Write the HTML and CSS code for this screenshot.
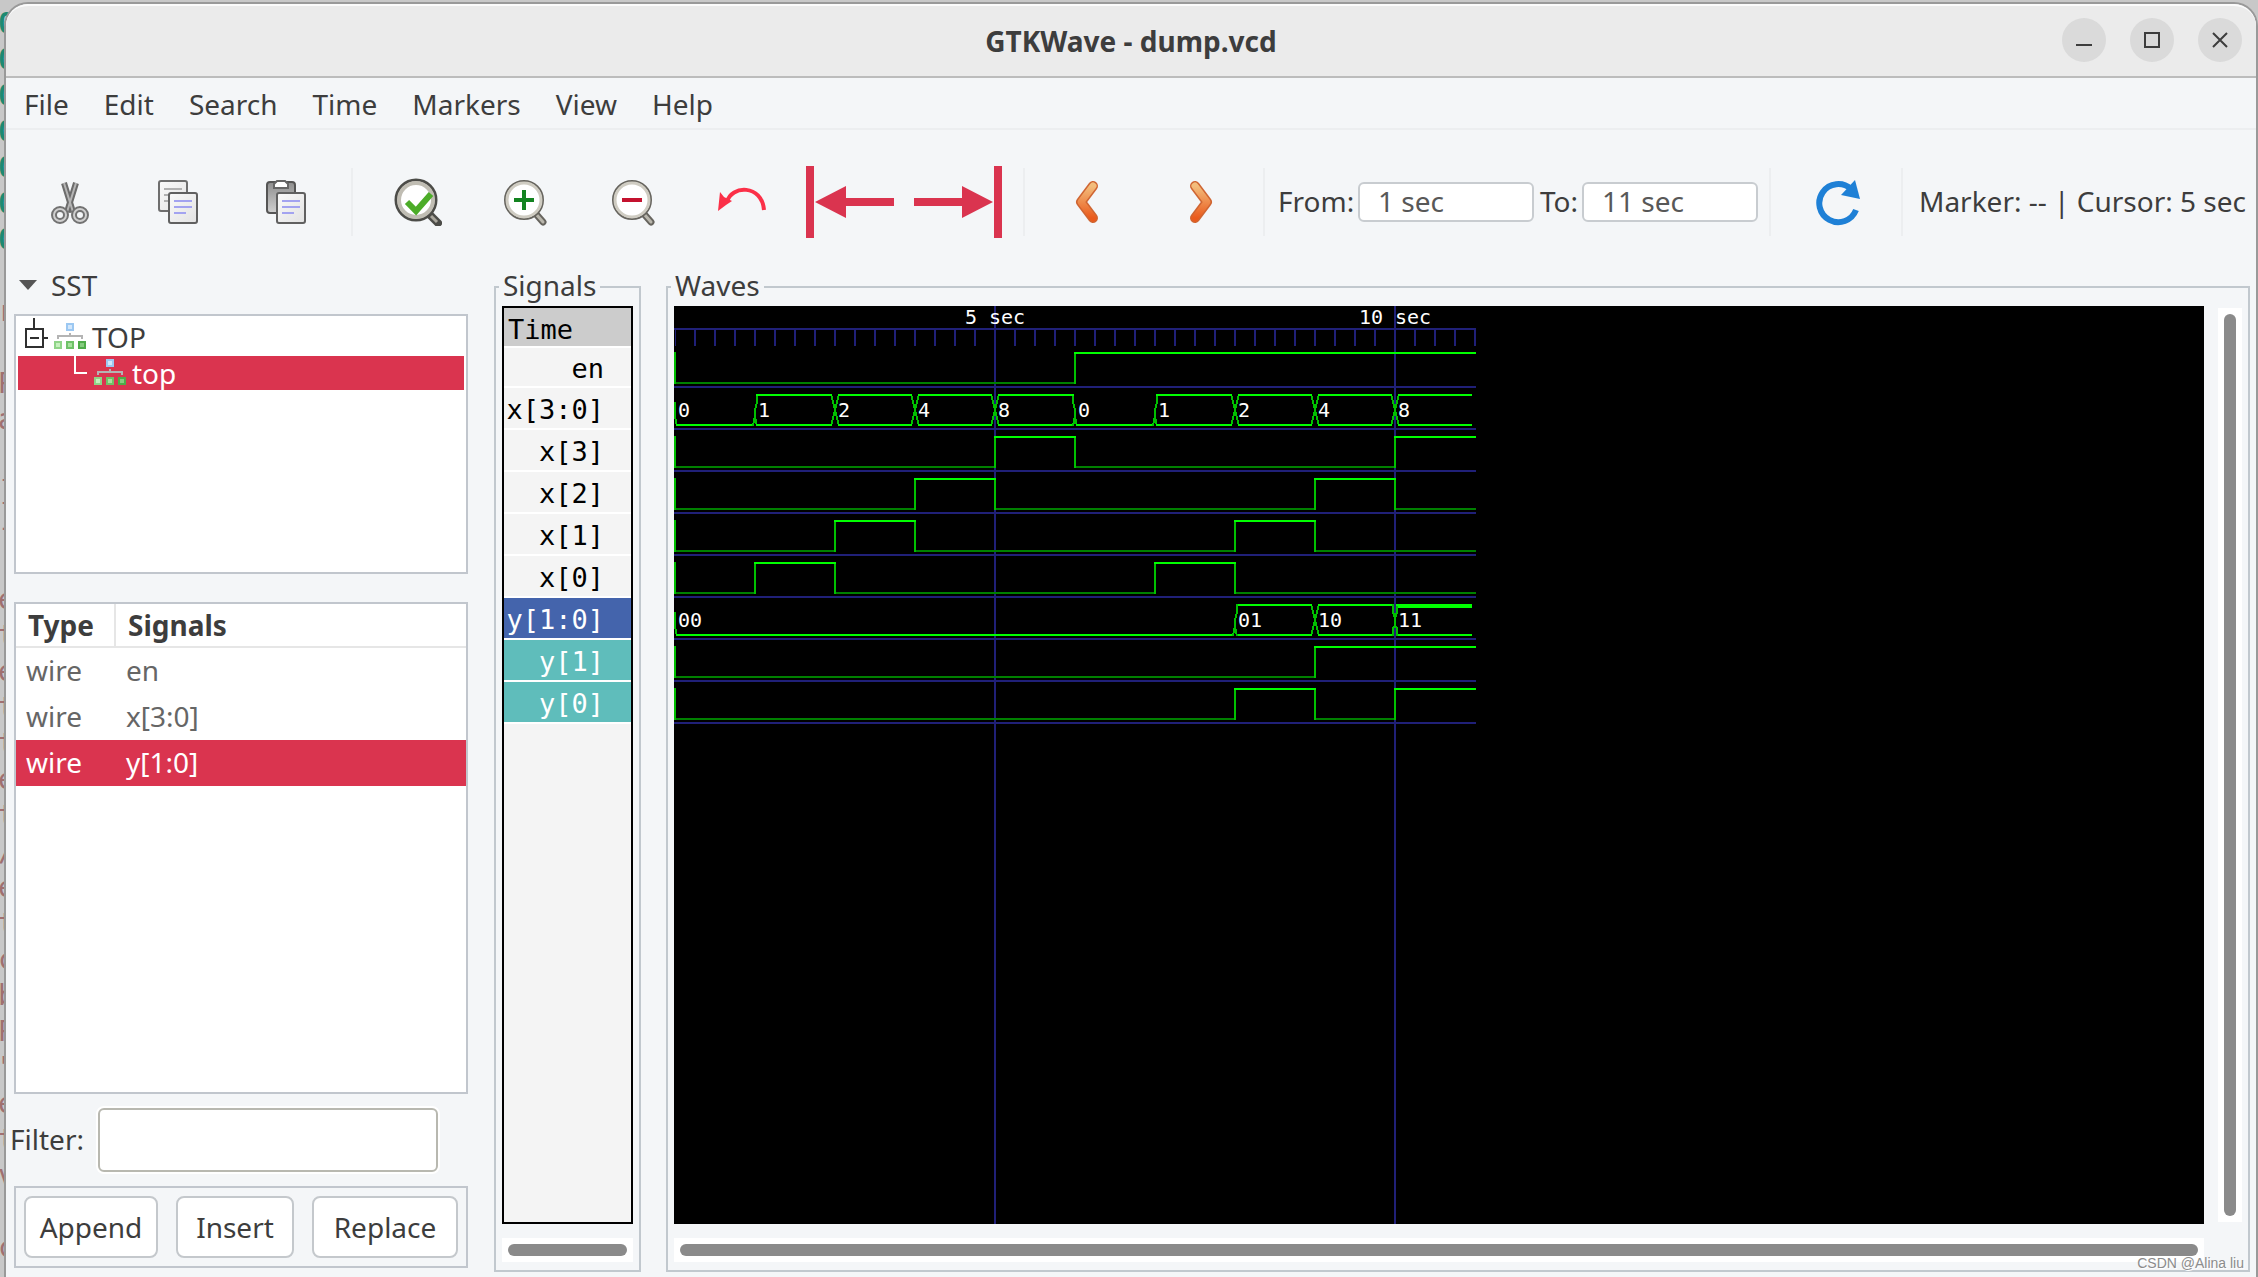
FILE: index.html
```html
<!DOCTYPE html>
<html lang="en">
<head>
<meta charset="utf-8">
<title>GTKWave - dump.vcd</title>
<link rel="stylesheet" href="styles.css">
</head>
<body>
<svg class="defs" aria-hidden="true">
  <defs>
    <linearGradient id="amber" x1="0" y1="0" x2="0" y2="1"><stop offset="0" stop-color="#f3bd7c"/><stop offset="1" stop-color="#ea5a1c"/></linearGradient>
    <linearGradient id="paper" x1="0" y1="0" x2="1" y2="1"><stop offset="0" stop-color="#fafafa"/><stop offset="1" stop-color="#e2e2e2"/></linearGradient>
    <linearGradient id="board" x1="0" y1="0" x2="0" y2="1"><stop offset="0" stop-color="#8e8e8e"/><stop offset="1" stop-color="#d0d0d0"/></linearGradient>
    <symbol id="module" viewBox="0 0 32 28">
      <rect x="12" y="0" width="8" height="8" fill="#9cc8f2"/><rect x="14" y="2" width="4" height="4" fill="#d3e7fb"/>
      <path d="M16 10v3M4 16v-3h24v3" fill="none" stroke="#b4b4b4" stroke-width="2"/>
      <rect x="0" y="18" width="8" height="8" fill="#8fd487"/><rect x="2" y="20" width="4" height="4" fill="#c5f0bd"/>
      <rect x="12" y="18" width="8" height="8" fill="#6fc268"/><rect x="14" y="20" width="4" height="4" fill="#a8e09f"/>
      <rect x="24" y="18" width="8" height="8" fill="#4fab49"/><rect x="26" y="20" width="4" height="4" fill="#86cb7f"/>
    </symbol>
    <symbol id="page" viewBox="0 0 30 32">
      <rect x="1" y="1" width="28" height="30" rx="2" fill="url(#paper)" stroke="#606060" stroke-width="2"/>
      <path d="M6 9h18M6 15h18M6 21h12" stroke="#a3a3f0" stroke-width="2"/>
    </symbol>
    <symbol id="lens" viewBox="0 0 48 48">
      <path d="M34 36l7 8" stroke="#66645e" stroke-width="7" stroke-linecap="round"/>
      <path d="M34 36l7 8" stroke="#b9b6ac" stroke-width="3" stroke-linecap="round"/>
      <circle cx="22" cy="22" r="19" fill="#fff" stroke="#66645e" stroke-width="2"/>
      <circle cx="22" cy="22" r="17" fill="none" stroke="#cfccc2" stroke-width="3"/>
    </symbol>
  </defs>
</svg>

<div class="terminal" aria-hidden="true"><pre><b>0
0
0
0
0
0
0</b>

r

P
a

]
-

e
t
e
t
t
e
t
/
e
t
c
b
P
"
e
t
v

c</pre></div>

<div class="window">
  <header class="titlebar">
    <h1>GTKWave - dump.vcd</h1>
    <div class="controls">
      <button type="button" aria-label="Minimize"><svg viewBox="0 0 44 44"><path d="M14 27h16" stroke="#3d3d3d" stroke-width="2"/></svg></button>
      <button type="button" aria-label="Maximize"><svg viewBox="0 0 44 44"><rect x="15" y="15" width="14" height="14" fill="none" stroke="#3d3d3d" stroke-width="2"/></svg></button>
      <button type="button" aria-label="Close"><svg viewBox="0 0 44 44"><path d="M15 15l14 14M29 15l-14 14" stroke="#3d3d3d" stroke-width="2"/></svg></button>
    </div>
  </header>

  <nav class="menubar">
    <button type="button">File</button><button type="button">Edit</button><button type="button">Search</button><button type="button">Time</button><button type="button">Markers</button><button type="button">View</button><button type="button">Help</button>
  </nav>

  <div class="toolbar">
    <button type="button" class="tool" aria-label="Cut"><svg viewBox="0 0 48 48">
      <g fill="none" stroke="#6c6c6c" stroke-width="6"><path d="M18 5l9 29M30 5l-9 29"/></g>
      <g fill="none" stroke="#b5b5b5" stroke-width="2"><path d="M18 5l9 29M30 5l-9 29"/></g>
      <g fill="none" stroke="#727272" stroke-width="6"><circle cx="14" cy="37" r="6"/><circle cx="34" cy="37" r="6"/></g>
      <g fill="none" stroke="#cfcfcf" stroke-width="2"><circle cx="14" cy="37" r="6"/><circle cx="34" cy="37" r="6"/></g></svg></button>
    <button type="button" class="tool" aria-label="Copy"><svg viewBox="0 0 48 48">
      <rect x="5" y="3" width="28" height="30" rx="2" fill="url(#paper)" stroke="#6e6e6e" stroke-width="2"/>
      <path d="M10 11h18M10 17h10M10 23h6" stroke="#b0b0b0" stroke-width="2"/><use href="#page" x="14" y="14" width="30" height="32"/></svg></button>
    <button type="button" class="tool" aria-label="Paste"><svg viewBox="0 0 48 48">
      <rect x="5" y="4" width="28" height="31" rx="3" fill="url(#board)" stroke="#555" stroke-width="2"/>
      <path d="M12 10V6l3-3h8l3 3v4z" fill="#fff" stroke="#666" stroke-width="2"/><use href="#page" x="14" y="14" width="30" height="32"/></svg></button>
    <span class="sep"></span>
    <button type="button" class="tool" aria-label="Zoom fit"><svg viewBox="0 0 48 48">
      <path d="M37 38l7 7" stroke="#4c4c48" stroke-width="8" stroke-linecap="round"/><path d="M37 38l6 6" stroke="#a9a69c" stroke-width="3"/>
      <circle cx="22" cy="22" r="20" fill="#fff" stroke="#4c4c48" stroke-width="3"/><circle cx="22" cy="22" r="17" fill="none" stroke="#c0bdb3" stroke-width="4"/>
      <path d="M13 24l9 9 15-17" fill="none" stroke="#4cac28" stroke-width="6"/></svg></button>
    <button type="button" class="tool" aria-label="Zoom in"><svg viewBox="0 0 48 48"><use href="#lens"/><path d="M12 22h20M22 12v20" stroke="#138320" stroke-width="4"/></svg></button>
    <button type="button" class="tool" aria-label="Zoom out"><svg viewBox="0 0 48 48"><use href="#lens"/><path d="M12 22h20" stroke="#c4122f" stroke-width="4"/></svg></button>
    <button type="button" class="tool" aria-label="Undo zoom"><svg viewBox="0 0 48 48"><path d="M9 24C13 7 44 6 46 32" fill="none" stroke="#fb3048" stroke-width="4"/><path d="M0 33l2-19 4 5 8 4-6 4z" fill="#fb3048"/></svg></button>
    <button type="button" class="tool wide" aria-label="Zoom to start"><svg viewBox="0 0 88 72"><path d="M0 0h8v72H0zM9 36L40 20v12h48v8H40v12z" fill="#da344f"/></svg></button>
    <button type="button" class="tool wide" aria-label="Zoom to end"><svg viewBox="0 0 88 72"><path d="M80 0h8v72h-8zM79 36L48 20v12H0v8h48v12z" fill="#da344f"/></svg></button>
    <span class="sep"></span>
    <button type="button" class="tool" aria-label="Previous edge"><svg viewBox="0 0 48 48"><g fill="none" stroke-linecap="round" stroke-linejoin="round"><path d="M27 8L15 24l12 16" stroke="#cf6532" stroke-width="10"/><path d="M27 8L15 24l12 16" stroke="url(#amber)" stroke-width="7"/></g></svg></button>
    <button type="button" class="tool" aria-label="Next edge"><svg viewBox="0 0 48 48"><g fill="none" stroke-linecap="round" stroke-linejoin="round"><path d="M21 8l12 16-12 16" stroke="#cf6532" stroke-width="10"/><path d="M21 8l12 16-12 16" stroke="url(#amber)" stroke-width="7"/></g></svg></button>
    <span class="sep"></span>
    <label class="from" for="from">From:</label><input id="from" class="time" type="text" value="1 sec">
    <label class="to" for="to">To:</label><input id="to" class="time" type="text" value="11 sec">
    <span class="sep"></span>
    <button type="button" class="tool" aria-label="Reload"><svg viewBox="0 0 48 48"><path d="M39 11A19 19 0 1 0 44 32" fill="none" stroke="#1e80d6" stroke-width="6"/><path d="M43 2l5 19-19-4z" fill="#1e80d6"/></svg></button>
    <span class="sep"></span>
    <output class="status">Marker: -- | Cursor: 5 sec</output>
  </div>

  <main class="panes">
    <section class="sst">
      <button type="button" class="expander"><svg viewBox="0 0 18 10"><path d="M0 0h18l-9 10z" fill="#555"/></svg>SST</button>
      <ul class="tree">
        <li><svg class="branch" viewBox="0 0 32 38"><path d="M16 0v10M26 20h4M8 11h17v18H8zM12 20h9" fill="none" stroke="#303030" stroke-width="2"/></svg><svg class="module"><use href="#module"/></svg>TOP</li>
        <li class="child selected"><svg class="branch" viewBox="0 0 32 34"><path d="M17 0v17h12" fill="none" stroke="#fff" stroke-width="2"/></svg><svg class="module"><use href="#module"/></svg>top</li>
      </ul>
      <div class="facilities">
        <table>
          <thead><tr><th>Type</th><th>Signals</th></tr></thead>
          <tbody>
            <tr><td>wire</td><td>en</td></tr>
            <tr><td>wire</td><td>x[3:0]</td></tr>
            <tr class="selected"><td>wire</td><td>y[1:0]</td></tr>
          </tbody>
        </table>
      </div>
      <div class="filter"><label for="filter">Filter:</label><input id="filter" type="text"></div>
      <div class="actions"><button type="button">Append</button><button type="button">Insert</button><button type="button">Replace</button></div>
    </section>

    <fieldset class="frame">
      <legend>Signals</legend>
      <ul class="names">
        <li class="head">Time</li>
        <li class="scalar">en</li>
        <li>x[3:0]</li>
        <li>x[3]</li>
        <li>x[2]</li>
        <li>x[1]</li>
        <li>x[0]</li>
        <li class="bus">y[1:0]</li>
        <li class="bit">y[1]</li>
        <li class="bit">y[0]</li>
      </ul>
      <div class="track"><div class="thumb"></div></div>
    </fieldset>

    <fieldset class="frame waves">
      <legend>Waves</legend>
      <div class="canvas">
        <svg class="plot" width="802" role="img" aria-label="Waveforms">
          <!-- time ruler, row dividers and 5-second grid lines -->
          <g fill="#202078">
            <rect y="22" width="802" height="2"/>
            <path class="ticks" d="M1 32h801"/>
            <rect x="320" width="2" height="100%"/><rect x="720" width="2" height="100%"/>
          </g>
          <path class="divider" d="M0 81h802M0 123h802M0 165h802M0 207h802M0 249h802M0 291h802M0 333h802M0 375h802M0 417h802"/>
          <path class="low" d="M0 77h402M0 161h322M400 161h322M0 203h242M320 203h322M720 203h82M0 245h162M240 245h322M640 245h162M0 287h82M160 287h322M560 287h242M0 371h642M0 413h562M640 413h82"/>
          <path class="edge" d="M1 46v32M401 46v32M1 130v32M321 130v32M401 130v32M721 130v32M1 172v32M241 172v32M321 172v32M641 172v32M721 172v32M1 214v32M161 214v32M241 214v32M561 214v32M641 214v32M1 256v32M81 256v32M161 256v32M481 256v32M561 256v32M1 340v32M641 340v32M1 382v32M561 382v32M641 382v32M721 382v32"/>
          <path class="high" d="M400 47h402M320 131h82M720 131h82M240 173h82M640 173h82M160 215h82M560 215h82M80 257h82M480 257h82M640 341h162M560 383h82M720 383h82"/>
          <!-- x[3:0] -->
          <path class="edge" d="M1 96v14l2 10M83 88v8l-2 8v6l-2 10M81 110l2 10M157 88l8 32M165 88l-8 32M237 88l8 32M245 88l-8 32M317 88l8 32M325 88l-8 32M399 88v8l2 8v6l2 10M401 110l-2 10M483 88v8l-2 8v6l-2 10M481 110l2 10M557 88l8 32M565 88l-8 32M637 88l8 32M645 88l-8 32M717 88l8 32M725 88l-8 32"/>
          <path class="high" d="M2 119h76M82 119h76M164 119h74M244 119h74M324 119h74M402 119h76M482 119h76M564 119h74M644 119h74M724 119h74M82 89h76M164 89h74M244 89h74M324 89h76M482 89h76M564 89h74M644 89h74M724 89h74"/>
          <!-- y[1:0] -->
          <path class="edge" d="M1 306v14l2 10M563 298v8l-2 8v6l-2 10M561 320l2 10M637 298l8 32M645 298l-8 32M719 298v8l2 6v8l-2 2v8M723 298v8l-2 6v8l2 2v8"/>
          <path class="high" d="M2 329h556M564 329h74M644 329h74M724 329h74M564 299h74M644 299h74M722 299h76M724 301h74"/>
          <g class="labels">
            <text x="321" y="18" text-anchor="middle">5 sec</text><text x="721" y="18" text-anchor="middle">10 sec</text>
            <text x="4" y="111">0</text><text x="84" y="111">1</text><text x="164" y="111">2</text><text x="244" y="111">4</text><text x="324" y="111">8</text>
            <text x="404" y="111">0</text><text x="484" y="111">1</text><text x="564" y="111">2</text><text x="644" y="111">4</text><text x="724" y="111">8</text>
            <text x="4" y="321">00</text><text x="564" y="321">01</text><text x="644" y="321">10</text><text x="724" y="321">11</text>
          </g>
        </svg>
      </div>
      <div class="track vertical"><div class="thumb"></div></div>
      <div class="track"><div class="thumb"></div></div>
    </fieldset>
  </main>
  <span class="watermark">CSDN @Alina liu</span>
</div>
</body>
</html>
```
FILE: styles.css
```css
* { box-sizing: border-box; }
body {
  margin: 0;
  min-height: 100vh;
  display: flex;
  background: #c8c8c8;
  font: 28px/38px "Noto Sans", "Open Sans", sans-serif;
  color: #3d3d3d;
  padding-top: 2px;
  position: relative;
}
button, input { font: inherit; color: inherit; margin: 0; }
button { background: none; border: 0; padding: 0; }
ul { list-style: none; margin: 0; padding: 0; }
svg { display: block; }
.defs { position: absolute; width: 0; height: 0; }

/* sliver of the terminal behind the window */
.terminal { flex: 0 0 4px; position: relative; }
.terminal pre {
  position: absolute;
  top: 4px;
  left: -2px;
  margin: 0;
  font: 28px/36px "DejaVu Sans Mono", monospace;
  color: #a07070;
}
.terminal b { color: #1d8a72; }

.window {
  flex: 1;
  min-width: 0;
  display: flex;
  flex-direction: column;
  position: relative;
  z-index: 1;
  background: #f4f6f8;
  border: 2px solid #999;
  border-bottom: 0;
  border-radius: 24px 24px 0 0;
}

.titlebar {
  height: 74px;
  display: grid;
  grid-template-columns: 1fr auto 1fr;
  align-items: center;
  padding: 0 14px 2px;
  background: #ebebeb;
  border-top: 2px solid #fbfbfb;
  border-bottom: 2px solid #bcbcbc;
  border-radius: 22px 22px 0 0;
}
.titlebar h1 { grid-column: 2; margin: 0; padding-top: 2px; font-size: 28px; line-height: 38px; }
.controls { justify-self: end; display: flex; gap: 24px; }
.controls button { width: 44px; height: 44px; border-radius: 50%; background: #dadada; }

.menubar {
  height: 52px;
  display: flex;
  gap: 3px;
  padding: 2px 2px 0;
  border-bottom: 2px solid #eceef0;
}
.menubar button { padding: 0 16px; }

.toolbar {
  height: 138px;
  display: flex;
  align-items: center;
  padding: 6px 10px 0;
}
.tool { flex: 0 0 108px; display: grid; place-items: center; }
.tool svg { width: 48px; height: 48px; }
.tool.wide svg { width: 88px; height: 72px; }
.sep { flex: 0 0 24px; height: 68px; }
.sep::before { content: ""; display: block; width: 2px; height: 68px; margin-left: 11px; background: #eceef0; }
.toolbar label, .status { padding-bottom: 2px; white-space: nowrap; }
.toolbar .from { flex: 0 0 82px; padding-left: 2px; }
.toolbar .to { flex: 0 0 48px; padding-left: 6px; }
.time {
  flex: 0 1 176px;
  width: 176px;
  min-width: 0;
  height: 40px;
  padding: 0 18px 2px;
  border: 2px solid #c8ccd0;
  border-radius: 6px;
  background: #fff;
  color: #585858;
}
.status { margin-left: auto; }

.panes {
  flex: 1;
  display: grid;
  grid-template-columns: 463px 147px minmax(0, 1fr);
  column-gap: 25px;
  padding: 0 6px 5px 0;
}

.sst { display: flex; flex-direction: column; padding-right: 1px; }
.expander { display: flex; align-items: center; gap: 14px; padding: 0 0 4px 13px; line-height: 34px; margin-bottom: 8px; }
.expander svg { width: 18px; height: 10px; }
.tree, .facilities, .actions { margin-left: 8px; border: 2px solid #c1c6cd; }
.tree { height: 260px; background: #fff; padding: 2px; margin-bottom: 28px; }
.tree li { display: flex; align-items: center; height: 38px; }
.tree .child { height: 34px; padding-left: 40px; }
.branch { width: 32px; height: 100%; margin-right: 4px; }
.module { width: 32px; height: 28px; margin-right: 6px; }
.selected { background: #da344f; color: #fff; }

.facilities { flex: 1; background: #fff; }
table { width: 100%; border-collapse: separate; border-spacing: 0; table-layout: fixed; }
th, td { text-align: left; padding: 0 0 0 10px; }
th:first-child { width: 100px; border-right: 2px solid #e6e6e6; }
th { height: 44px; line-height: 42px; border-bottom: 2px solid #e6e6e6; padding-left: 12px; }
td { height: 46px; line-height: 44px; padding-bottom: 2px; color: #666; }
.selected td { color: #fff; }

.filter { display: flex; align-items: center; gap: 12px; margin: 12px 0; padding-left: 4px; }
.filter label { padding-bottom: 2px; }
.filter input {
  flex: 0 1 344px;
  min-width: 0;
  height: 68px;
  border: 2px solid #fff;
  outline: 2px solid #b8b8b0;
  outline-offset: -4px;
  border-radius: 8px;
  background: #fff;
  padding: 0 16px;
}
.actions { display: grid; grid-template-columns: 134fr 118fr 146fr; gap: 18px; padding: 8px; margin-bottom: 4px; }
.actions button {
  height: 62px;
  border: 2px solid #c4c8cc;
  border-radius: 8px;
  background: #fff;
}

.frame {
  min-width: 0;
  margin: 0;
  border: 2px solid #c1c8ce;
  padding: 0 6px 8px;
  display: grid;
  grid-template-rows: 1fr 24px;
  row-gap: 14px;
}
legend { padding: 0 4px 4px; margin-left: -3px; line-height: 34px; }
.names {
  border: 2px solid #000;
  background: #f4f4f4;
  font: 27px/44px "DejaVu Sans Mono", monospace;
  color: #000;
}
.names li {
  height: 42px;
  padding-right: 27px;
  text-align: right;
  white-space: nowrap;
  border-bottom: 2px solid #fff;
}
.names .head { height: 40px; padding: 0 0 0 4px; background: #ccc; text-align: left; }
.names .scalar { height: 40px; line-height: 42px; }
.names .bus { background: #4464ac; color: #fff; }
.names .bit { background: #5fbdbb; color: #fff; }

.track { display: flex; background: #fff; padding: 6px; }
.thumb { flex: 1; border-radius: 6px; background: #8a8a8a; }
.waves { grid-template-columns: minmax(0, 1fr) 24px; column-gap: 14px; }
.vertical { margin: 2px 0; }
.canvas { display: flex; background: #000; overflow: hidden; }
.plot { flex: none; height: auto; shape-rendering: crispEdges; }
.plot path { fill: none; stroke-width: 2; }
.divider { stroke: #202078; }
.plot .ticks { stroke: #202078; stroke-width: 16; stroke-dasharray: 2 18; stroke-dashoffset: 1; }
.low { stroke: #008000; }
.edge { stroke: #00c000; }
.high { stroke: #0f0; }
.labels { font: 20px "DejaVu Sans Mono", monospace; fill: #fff; }

.watermark {
  position: absolute;
  right: 12px;
  bottom: 5px;
  font: 14px/18px "Liberation Sans", sans-serif;
  color: #8c8c8c;
  text-shadow: 1px 1px 0 #fff;
}
```
